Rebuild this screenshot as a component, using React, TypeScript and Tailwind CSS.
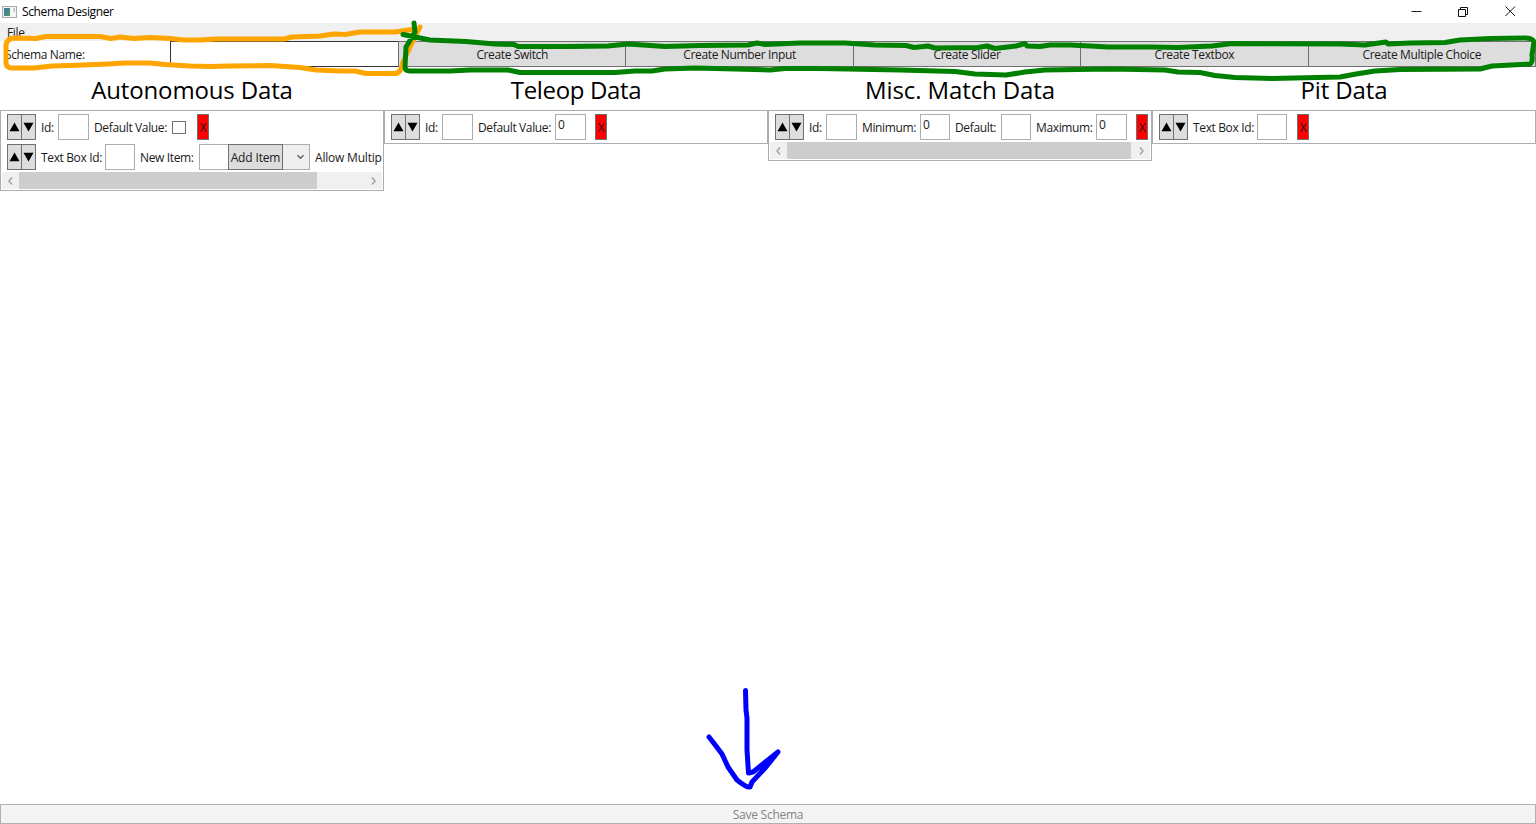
import React from 'react';

function Chevron({ dir }: { dir: 'left' | 'right' | 'down' }) {
  const d = { left: 'M6 1.5 L3 5 L6 8.5', right: 'M3 1.5 L6 5 L3 8.5', down: 'M1.5 3.2 L4.5 6.2 L7.5 3.2' }[dir];
  return (
    <svg className={dir === 'down' ? 'h-[10px] w-[9px] text-[#606060]' : 'h-[10px] w-[9px] text-[#a0a0a0]'} viewBox="0 0 9 10" fill="none">
      <path d={d} stroke="currentColor" strokeWidth="1.4" />
    </svg>
  );
}

function MoveButtons() {
  return (
    <div className="flex h-[26px] w-[29px] shrink-0 border border-[#707070] bg-[#dddddd]">
      <div className="flex w-[14px] items-center justify-center border-r border-[#707070]">
        <svg className="h-[10px] w-[11px]" viewBox="0 0 11 10"><path d="M5.5 .5 L10.5 9.3 H.5Z" /></svg>
      </div>
      <div className="flex flex-1 items-center justify-center">
        <svg className="h-[10px] w-[11px]" viewBox="0 0 11 10"><path d="M5.500 9.500 L.5 .7 H10.500Z" /></svg>
      </div>
    </div>
  );
}

function Label({ className, children }: { className: string; children: React.ReactNode }) {
  return <div className={`h-[26px] shrink-0 whitespace-nowrap pl-[5px] leading-[27px] ${className}`}>{children}</div>;
}

function Field({ className = 'w-[31px]', value = '' }: { className?: string; value?: string }) {
  return <div className={`h-[26px] shrink-0 border border-[#abadb3] bg-white pl-[2px] leading-[19px] ${className}`}>{value}</div>;
}

function Remove({ className }: { className: string }) {
  return (
    <div className={`flex h-[26px] w-[12px] shrink-0 items-center justify-center border border-[#707070] bg-[#ff0000] pt-px ${className}`}>X</div>
  );
}

function Row({ children }: { children: React.ReactNode }) {
  return <div className="flex h-[30px] pl-[6px] pt-[3px]">{children}</div>;
}

function Panel({ className, children }: { className: string; children: React.ReactNode }) {
  return <div className={`w-[384px] overflow-hidden border border-[#abadb3] ${className}`}>{children}</div>;
}

function Scrollbar({ thumb }: { thumb: string }) {
  return (
    <div className="mx-px flex h-[17px] bg-[#f0f0f0]">
      <div className="flex w-[17px] items-center justify-center"><Chevron dir="left" /></div>
      <div className={`bg-[#cdcdcd] ${thumb}`} />
      <div className="ml-auto flex w-[17px] items-center justify-center"><Chevron dir="right" /></div>
    </div>
  );
}

const actions = ['Create Switch', 'Create Number Input', 'Create Slider', 'Create Textbox', 'Create Multiple Choice'];
const headings = [
  { text: 'Autonomous Data', cls: 'tracking-[-0.15px]' },
  { text: 'Teleop Data', cls: 'tracking-[-0.35px]' },
  { text: 'Misc. Match Data', cls: 'tracking-[-0.1px]' },
  { text: 'Pit Data', cls: 'tracking-[-0.1px]' },
];

export default function App() {
  return (
    <div className="relative flex h-[824px] w-[1536px] flex-col overflow-hidden bg-white font-['Open_Sans','Noto_Sans',sans-serif] text-[12px] tracking-[-0.36px] text-[#1a1a1a]">
      <header className="flex h-[23px] shrink-0 items-center">
        <svg className="ml-[2px] h-[12px] w-[15px]" viewBox="0 0 15 12">
          <defs>
            <linearGradient id="pane" x1="0" y1="0" x2="1" y2="1">
              <stop offset="0" stopColor="#4b6fa5" />
              <stop offset="1" stopColor="#41a06c" />
            </linearGradient>
          </defs>
          <rect x=".5" y=".5" width="14" height="11" fill="#f5f5f5" stroke="#a7abb0" />
          <rect x="2" y="2" width="6" height="8" fill="url(#pane)" />
          <rect x="11.5" y="2" width="1.5" height="4" fill="#b9bec3" />
        </svg>
        <span className="ml-[5px] pt-px text-black">Schema Designer</span>
        <div className="ml-auto mr-[20px] flex items-center gap-[35px]">
          <svg className="h-[12px] w-[12px]" viewBox="0 0 12 12" fill="none" stroke="#222"><path d="M1.500 5.500 H11.500" /></svg>
          <svg className="h-[12px] w-[12px]" viewBox="0 0 12 12" fill="none" stroke="#111"><path d="M1.5 3.5 H8.5 V10.5 H1.5Z M3.5 3 V1.5 H10.5 V8.5 H9" /></svg>
          <svg className="h-[12px] w-[12px]" viewBox="0 0 12 12" fill="none" stroke="#111"><path d="M1.500 .5 L11 10 M11 .5 L1.500 10" /></svg>
        </div>
      </header>
      <nav className="h-[18px] shrink-0 bg-[#f0f0f0] pl-[7px] leading-[19px]">File</nav>
      <section className="flex h-[26px] shrink-0">
        <Label className="w-[170px] leading-[28px]">Schema Name:</Label>
        <div className="w-[229px] border border-[#333333]" />
        <div className="grid w-[1137px] grid-cols-5">
          {actions.map((a) => (
            <button key={a} className="-ml-px h-[26px] border border-[#707070] bg-[#dddddd] pt-[2px] leading-[22px]">{a}</button>
          ))}
        </div>
      </section>
      <section className="grid h-[43px] shrink-0 grid-cols-4 text-center text-[24px] leading-[46px] text-black">
        {headings.map((h) => <h2 key={h.text} className={h.cls}>{h.text}</h2>)}
      </section>
      <main className="grid flex-1 grid-cols-4 items-start">
        <Panel className="h-[81px]">
          <Row>
            <MoveButtons />
            <Label className="w-[22px]">Id:</Label>
            <Field />
            <Label className="w-[83px]">Default Value:</Label>
            <div className="mt-[7px] h-[13px] w-[14px] shrink-0 border border-[#707070]" />
            <Remove className="ml-[11px]" />
          </Row>
          <Row>
            <MoveButtons />
            <Label className="w-[69px]">Text Box Id:</Label>
            <Field className="w-[30px]" />
            <Label className="w-[64px]">New Item:</Label>
            <Field className="w-[30px]" />
            <div className="-ml-px h-[26px] w-[55px] shrink-0 border border-[#707070] bg-[#dddddd] text-center leading-[26px] tracking-[-0.15px]">Add Item</div>
            <div className="flex h-[26px] w-[27px] shrink-0 items-center justify-end border border-l-0 border-[#acacac] bg-[#efefef] pr-[4px]">
              <Chevron dir="down" />
            </div>
            <Label className="w-[73px] tracking-[-0.2px]">Allow Multip</Label>
          </Row>
          <div className="mt-px"><Scrollbar thumb="w-[298px]" /></div>
        </Panel>
        <Panel className="h-[34px]">
          <Row>
            <MoveButtons />
            <Label className="w-[22px]">Id:</Label>
            <Field />
            <Label className="w-[82px]">Default Value:</Label>
            <Field value="0" />
            <Remove className="ml-[9px]" />
          </Row>
        </Panel>
        <Panel className="h-[51px]">
          <Row>
            <MoveButtons />
            <Label className="w-[22px]">Id:</Label>
            <Field />
            <Label className="w-[63px]">Minimum:</Label>
            <Field className="w-[30px]" value="0" />
            <Label className="w-[51px]">Default:</Label>
            <Field className="w-[30px]" />
            <Label className="w-[65px]">Maximum:</Label>
            <Field value="0" />
            <Remove className="ml-[9px]" />
          </Row>
          <div className="mt-px"><Scrollbar thumb="w-[344px]" /></div>
        </Panel>
        <Panel className="h-[34px]">
          <Row>
            <MoveButtons />
            <Label className="w-[69px]">Text Box Id:</Label>
            <Field className="w-[30px]" />
            <Remove className="ml-[10px]" />
          </Row>
        </Panel>
      </main>
      <button className="h-[20px] shrink-0 border border-[#adb2b5] bg-[#f4f4f4] tracking-[-0.25px] text-[#838383]">
        <span className="block leading-[20px]">Save Schema</span>
      </button>
      <svg className="pointer-events-none absolute inset-0 h-[824px] w-[1536px]" viewBox="0 0 1536 824" fill="none" strokeWidth="5" strokeLinecap="round" strokeLinejoin="round">
        <path stroke="#ffa500" d="M420 27 L411 45 L403 62 Q401 74 394 73.500 H366 L355 71 H340 L316 70 L300 67.500 L270 65.500 L230 66 L210 66.500 L190 66 L165 64.500 L150 63 H125 L108 64 L70 65.500 L52 66 L34 68 H12 Q6 68 6 62 L6 45 Q7 38 15 38 L36 38.500 L46 36.500 L100 36.500 L111 38.500 L120 37 L134 38.500 L150 37.500 L170 38.500 L184 40 L200 40 L216 39 L284 39 L292 37 L320 36 L334 34 L345 34.500 L360 32 L395 32 L412 29.500" />
        <path stroke="#008000" d="M414 23 L415 32 L406 47 L405 67 Q405 71 410 71 L450 71 L470 70 L508 70 L520 72.500 L615 72.500 L635 71 L652 71 L665 69 L695 68 L735 69 L770 70 L785 68.500 L820 68.500 L900 70 L955 71.500 L975 74 L1006 75 L1025 72 L1045 70 L1110 69 L1165 70 L1178 72 L1200 72.500 L1215 75.500 L1235 77.500 L1272 78.500 L1340 77 L1356 74 L1375 71 L1400 69.500 L1480 69 L1492 66 L1530 64 Q1533 62 1532 55 L1534 42 Q1533 38 1525 38 L1490 38.500 L1460 40 L1445 42.500 L1410 43 L1388 44 L1386 42 L1365 45 L1340 44 L1232 43.500 L1212 46 L1178 47.500 L1150 47 L1108 47 L1090 46 L1070 45 L1050 45 L1040 46.500 L1027 46 L1025 43.500 L1016 46 L995 48.500 L987 46 L978 47.500 L935 48 L928 46 L914 47.500 L906 45.500 L875 45 L845 43 L800 43 L765 44.500 L757 43 L748 45 L700 45.500 L665 46.500 L628 44 L608 46 L570 46.500 L518 46.500 L514 44.500 L495 44 L466 41.500 L430 40 L403 34.500" />
        <path stroke="#0000ff" d="M745.500 690.500 L746 710 L747 718 L747 750 L748.500 773 L753 772 L778 752 L766 767 L752 782 L750 787 Q747 788 737 780 L728 767 L722 754 L716 746 L709 737" />
      </svg>
    </div>
  );
}
